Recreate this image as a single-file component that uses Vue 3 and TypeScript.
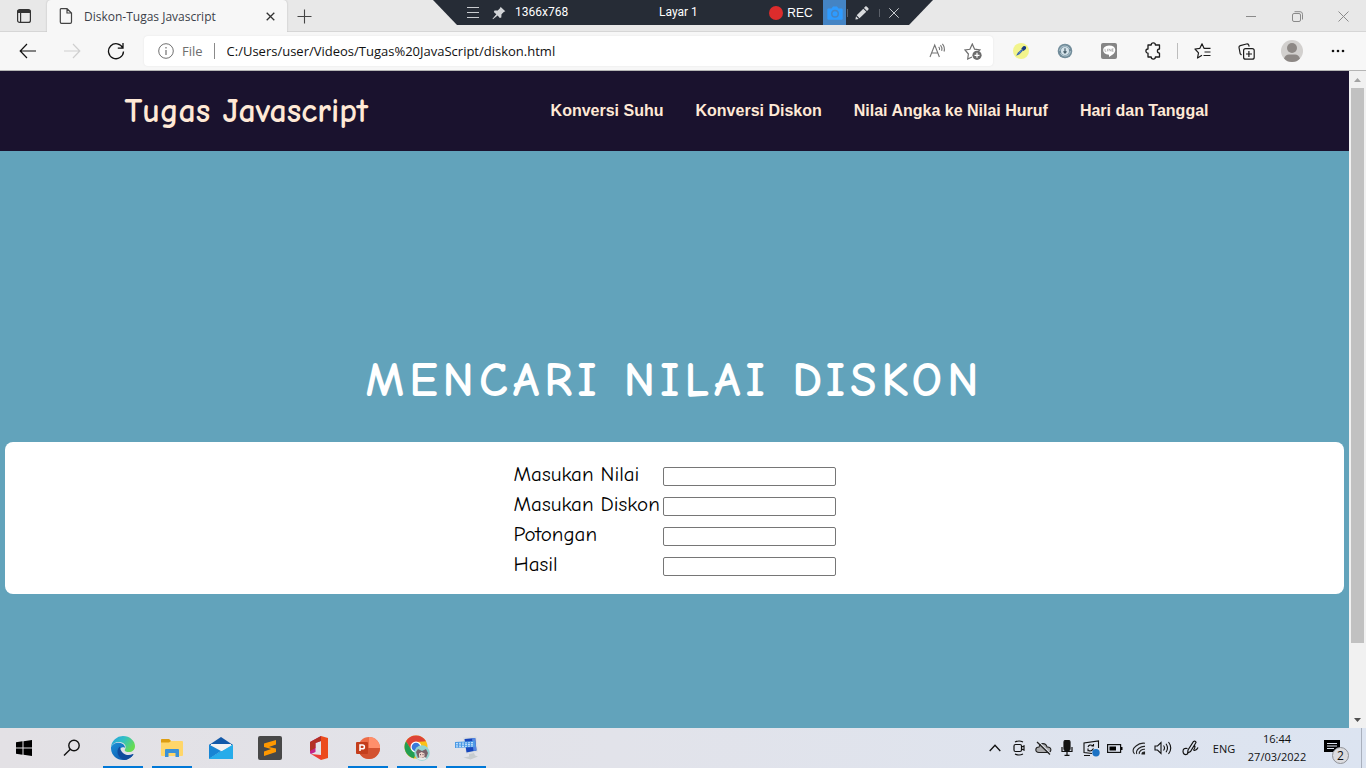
<script setup lang="ts">
import { ref } from 'vue'

interface Field {
  id: string
  label: string
}

const links: string[] = ['Konversi Suhu', 'Konversi Diskon', 'Nilai Angka ke Nilai Huruf', 'Hari dan Tanggal']

const fields: Field[] = [
  { id: 'nilai', label: 'Masukan Nilai' },
  { id: 'diskon', label: 'Masukan Diskon' },
  { id: 'potongan', label: 'Potongan' },
  { id: 'hasil', label: 'Hasil' },
]

const values = ref<Record<string, string>>({ nilai: '', diskon: '', potongan: '', hasil: '' })
const address = ref('C:/Users/user/Videos/Tugas%20JavaScript/diskon.html')
</script>

<template>
  <div class="screen">
    <div class="tabstrip">
      <button class="tab-menu" aria-label="Tab actions">
        <svg width="16" height="16" viewBox="0 0 16 16" fill="none" stroke="#333" stroke-width="1.2">
          <rect x="1.600" y="1.600" width="12.800" height="12.800" rx="2" />
          <path d="M1.600 3.500h12.800" stroke-width="3" />
          <path d="M4.600 5v9.400" />
        </svg>
      </button>
      <div class="tab">
        <svg width="14" height="16" viewBox="0 0 14 16" fill="none" stroke="#444" stroke-width="1.200">
          <path d="M2 .7h6L12.500 5v9q0 1.300-1.300 1.300H2.500Q1.300 15.300 1.300 14V1.500Q1.300.7 2 .7zM8 .9V5h4.300" />
        </svg>
        <span class="tab-title">Diskon-Tugas Javascript</span>
        <button class="tab-close" aria-label="Close tab">
          <svg width="9" height="9" viewBox="0 0 9 9" stroke="#333" stroke-width="1.300"><path d="M.7.7l7.600 7.600M8.300.7L.7 8.300" /></svg>
        </button>
      </div>
      <button class="tab-new" aria-label="New tab">
        <svg width="15" height="15" viewBox="0 0 15 15" stroke="#444" stroke-width="1.100"><path d="M7.500.5v14M.5 7.500h14" /></svg>
      </button>
      <div class="window-controls">
        <button aria-label="Minimize"><svg width="10" height="10" viewBox="0 0 10 10" stroke="#8a8a8a"><path d="M0 5.500h10" /></svg></button>
        <button aria-label="Restore">
          <svg width="11" height="11" viewBox="0 0 11 11" fill="none" stroke="#8a8a8a">
            <rect x=".5" y="2.500" width="8" height="8" rx="1.500" /><path d="M2.500.7h5.500q2.500 0 2.500 2.500v5.300" />
          </svg>
        </button>
        <button aria-label="Close"><svg width="11" height="11" viewBox="0 0 11 11" stroke="#8a8a8a"><path d="M.5.5l10 10M10.500.5l-10 10" /></svg></button>
      </div>
    </div>

    <div class="recorder">
      <button class="rec-menu" aria-label="Menu">
        <svg width="12" height="11" viewBox="0 0 12 11" stroke="#c9ccd0"><path d="M0 .5h12M0 5.500h12M0 10.500h12" /></svg>
      </button>
      <button class="rec-pin" aria-label="Pin">
        <svg width="14" height="14" viewBox="0 0 14 14" fill="#d2d4d7">
          <path d="M8.500.7L13.300 5.300 11.800 6 9.500 8.200 9.300 11.500 7.800 12 5.600 9.400 1 13.300.5 12.800 4.300 8.200 1.800 6 2.500 4.600 5.800 4.500 8.200 2z" />
        </svg>
      </button>
      <span class="rec-size">1366x768</span>
      <span class="rec-screen">Layar 1</span>
      <button class="rec-start"><span class="rec-dot"></span>REC</button>
      <button class="rec-camera" aria-label="Take screenshot">
        <svg width="16" height="14" viewBox="0 0 16 14">
          <path fill="#2e9bff" d="M1 2.500h3.500L6 .5h4l1.500 2H15l.7.7V13l-.7.700H1L.3 13V3.200z" />
          <circle cx="8" cy="7.700" r="4" fill="#4484c4" /><circle cx="8" cy="7.700" r="2.500" fill="#2e9bff" />
        </svg>
      </button>
      <button class="rec-tool" aria-label="Draw">
        <svg width="14" height="14" viewBox="0 0 14 14" fill="#d8dadd">
          <path d="M10.200.5Q11 0 11.700.6L13.400 2.300Q14 3 13.300 3.700L12 5 9 2zM8.300 2.700L11.300 5.700 4.500 12.300 1.700 9.300zM1 10.200L3.700 13 .4 13.600z" />
        </svg>
      </button>
      <button class="rec-tool" aria-label="Close recorder">
        <svg width="10" height="10" viewBox="0 0 10 10" stroke="#c9ccd0"><path d="M.3.3l9.400 9.400M9.700.3L.3 9.700" /></svg>
      </button>
    </div>

    <div class="toolbar">
      <button aria-label="Back">
        <svg width="18" height="16" viewBox="0 0 18 16" fill="none" stroke="#111" stroke-width="1.200"><path d="M17 8H1.500M8 1L1.200 8 8 15" /></svg>
      </button>
      <button aria-label="Forward" disabled>
        <svg width="18" height="16" viewBox="0 0 18 16" fill="none" stroke="#cfcfcf" stroke-width="1.200"><path d="M1 8h15.500M10 1l6.800 7-6.800 7" /></svg>
      </button>
      <button aria-label="Refresh">
        <svg width="18" height="18" viewBox="0 0 18 18" fill="none" stroke="#111" stroke-width="1.300">
          <path d="M15.800 6A7.500 7.500 0 1 0 16.500 9.500M16 1v5.200h-5.200" />
        </svg>
      </button>
      <div class="address">
        <svg width="16" height="16" viewBox="0 0 16 16" fill="none" stroke="#707070">
          <circle cx="8" cy="8" r="7.300" /><path d="M8 7v5M8 4v1.400" stroke-width="1.200" />
        </svg>
        <label class="scheme" for="address">File</label>
        <input id="address" v-model="address" type="text" spellcheck="false" />
        <button aria-label="Read aloud">
          <svg width="17" height="16" viewBox="0 0 17 16" fill="none" stroke="#757575" stroke-width="1.100">
            <path d="M1 14L5.700 2 10.400 14M2.700 10h6M9.700 3.800Q11 5.300 10.500 7M11.500 2.200Q13.600 4.700 12.700 7.800M13.400.8Q16.300 4.300 15 8.500" />
          </svg>
        </button>
        <button aria-label="Add to favorites">
          <svg width="18" height="17" viewBox="0 0 18 17" fill="none" stroke="#6e6e6e" stroke-width="1.200">
            <path d="M8 14l-4.300 2 .7-5L1 7l4.900-.7L8.300 1l2.300 5.200 5.300.7-2 2" />
            <circle cx="13" cy="12.300" r="4.600" fill="#6b6b6b" stroke="none" /><path d="M13 9.800v5M10.500 12.300h5" stroke="#fff" />
          </svg>
        </button>
      </div>
      <button aria-label="Color picker">
        <svg width="16" height="16" viewBox="0 0 16 16">
          <circle cx="8" cy="8" r="8" fill="#f2f48c" />
          <path d="M3.200 12.800L4.800 9.700 8.700 6.200 10 7.500 6.500 11.300z" fill="#2c5cae" /><path d="M8.300 5.600L10.300 3.300q1.500-.6 2.400.3.800.9.200 2.300L10.500 7.900z" fill="#173a82" /><path d="M5.700 10.500L8.300 8" stroke="#82a8e6" stroke-width=".7" />
        </svg>
      </button>
      <button aria-label="Download extension">
        <svg width="16" height="16" viewBox="0 0 16 16" fill="none">
          <circle cx="8" cy="8" r="7.300" fill="#718c9a" /><circle cx="8" cy="8" r="4" fill="#d6e4eb" />
          <path d="M2.700 8q.3-5 5.300-5 3.500 0 4.500 3M13.300 8q-.3 5-5.300 5-3.500 0-4.500-3" stroke="#b5c9d2" /><path d="M8 5.300v4.500M6.500 8.300L8 10l1.500-1.700" stroke="#49606c" stroke-width="1.200" />
        </svg>
      </button>
      <button aria-label="LINE">
        <svg width="16" height="16" viewBox="0 0 16 16">
          <rect width="16" height="16" rx="2" fill="#858585" /><path d="M8 2.500c7.800 0 7.500 6.700 3.700 9L8 14v-2.300C.2 11.500.3 2.500 8 2.500z" fill="#fff" />
          <path d="M4 5.800v2.500h1.300M6.500 5.800v2.500M8 8.300V5.800l2 2.500V5.800M12.500 5.800h-1.300v2.500h1.300M11.200 7h1.200" stroke="#909090" stroke-width=".6" fill="none" />
        </svg>
      </button>
      <button aria-label="Extensions">
        <svg width="16" height="18" viewBox="0 0 16 18" fill="none" stroke="#1c1c1c" stroke-width="1.300" stroke-linejoin="round">
          <path d="M3 3h3.200a2.100 2.100 0 0 1 4.200 0H14.500V7a2.100 2.100 0 0 0 0 4.200V15H10.400a2.100 2.100 0 0 1-4.200 0H3v-3.800a2.100 2.100 0 0 1 0-4.200z" />
        </svg>
      </button>
      <span class="divider"></span>
      <button aria-label="Favorites">
        <svg width="17" height="16" viewBox="0 0 17 16" fill="none" stroke="#1c1c1c" stroke-width="1.200" stroke-linejoin="round">
          <path d="M8 12.300L3.500 15l1-5.200L1 6l4.900-.7L8 .8l2 4.500h6.500M10.500 9h6M9.500 12.500h7" />
        </svg>
      </button>
      <button aria-label="Collections">
        <svg width="17" height="17" viewBox="0 0 17 17" fill="none" stroke="#1c1c1c" stroke-width="1.200">
          <path d="M3.500 12L2.200 10.800 1 4.500Q.8 3 2.200 2.600L8.500 1q1.600-.3 2.200 1l.5 1.700" /><rect x="5.600" y="5.600" width="10.600" height="10.600" rx="2" /><path d="M10.900 8v6M8 11h6" />
        </svg>
      </button>
      <button class="profile" aria-label="Profile">
        <svg width="22" height="22" viewBox="0 0 22 22">
          <circle cx="11" cy="11" r="11" fill="#d2d0ce" /><circle cx="11" cy="8" r="5" fill="#8d8885" /><path d="M3 18.500q1.500-4 5-4h6q3.500 0 5 4Q16 22 11 22t-8-3.500z" fill="#8d8885" />
        </svg>
      </button>
      <button aria-label="Settings and more">
        <svg width="14" height="4" viewBox="0 0 14 4" fill="#111"><circle cx="2" cy="2" r="1.300" /><circle cx="7" cy="2" r="1.300" /><circle cx="12" cy="2" r="1.300" /></svg>
      </button>
    </div>

    <div class="viewport">
      <div class="page">
        <header class="site-header">
          <div class="container">
            <a class="brand" href="#">Tugas Javascript</a>
            <nav>
              <a v-for="link in links" :key="link" href="#">{{ link }}</a>
            </nav>
          </div>
        </header>
        <main>
          <h1>MENCARI NILAI DISKON</h1>
          <form class="card" @submit.prevent>
            <div class="fields">
              <template v-for="field in fields" :key="field.id">
                <label :for="field.id">{{ field.label }}</label>
                <input :id="field.id" v-model="values[field.id]" type="text" />
              </template>
            </div>
          </form>
        </main>
      </div>
      <div class="scrollbar">
        <span class="scroll-end"><svg width="7" height="4" viewBox="0 0 7 4" fill="#a3a3a3"><path d="M0 4L3.500 0 7 4z" /></svg></span>
        <span class="thumb"></span>
        <span class="track"></span>
        <span class="scroll-end"><svg width="7" height="4" viewBox="0 0 7 4" fill="#505050"><path d="M0 0h7L3.500 4z" /></svg></span>
      </div>
    </div>

    <footer class="taskbar">
      <button class="task start" aria-label="Start">
        <svg width="16" height="16" viewBox="0 0 16 16"><path d="M0 2.200L6.500 1.300V7.500H0zM7.500 1.200L16 0V7.500H7.500zM0 8.500H6.500V14.700L0 13.800zM7.500 8.500H16V16L7.500 14.800z" /></svg>
      </button>
      <button class="task search" aria-label="Search">
        <svg width="18" height="18" viewBox="0 0 18 18" fill="none" stroke="#111" stroke-width="1.400"><circle cx="11" cy="6.500" r="5.200" /><path d="M7.300 10.300L1 16.600" /></svg>
      </button>
      <button class="task running" aria-label="Microsoft Edge">
        <svg width="24" height="24" viewBox="0 0 24 24">
          <defs>
            <linearGradient id="edge-a" x1="0" y1="0" x2="1" y2=".5"><stop offset="0" stop-color="#249fe0" /><stop offset=".5" stop-color="#31bfc6" /><stop offset="1" stop-color="#66dc52" /></linearGradient>
            <linearGradient id="edge-b" x1="0" y1="0" x2="1" y2="1"><stop offset="0" stop-color="#1b91d8" /><stop offset="1" stop-color="#0c4ca5" /></linearGradient>
          </defs>
          <path d="M0 11A12 12 0 0 1 12 0c7 0 12 5 12 10 0 4-3 6-6 6-3.500 0-5-1.300-4-2.700 1.500-2.300.5-6-4-7C6 5.300 2 7 0 11z" fill="url(#edge-a)" />
          <path d="M0 11C2 7 6 6 9.500 7c3 .8 4.700 3 4.500 4.700C9 9.500 7.200 15 11 18.500c3.500 3.200 8 2.500 11.200 0A12 12 0 0 1 12 24C5.500 24-.5 19 0 11z" fill="url(#edge-b)" />
          <path d="M8.800 10.500C4 15 7 22 13.500 23.900c3.500-.3 6.800-2.200 8.900-5.200.3-.600-.2-.8-.6-.6C16 21 9.500 17.500 8.800 10.500z" fill="#104b9d" />
        </svg>
      </button>
      <button class="task running" aria-label="File Explorer">
        <svg width="22" height="20" viewBox="0 0 22 20">
          <path d="M0 2q0-1 1-1h7l2 2h11q1 0 1 1v13q0 1-1 1H1q-1 0-1-1z" fill="#ffd669" /><path d="M0 2q0-1 1-1h7l2 2-2 1.500H0z" fill="#dd9d12" />
          <path d="M4 19v-7q0-1 1-1h12q1 0 1 1v7h-3.500v-4h-7v4z" fill="#3a91d7" />
        </svg>
      </button>
      <button class="task" aria-label="Mail">
        <svg width="24" height="22" viewBox="0 0 24 22">
          <path d="M0 8L12 0l12 8z" fill="#1259a9" /><path d="M2 7h20v8H2z" fill="#f2f2f3" /><path d="M0 7.500L12 14 0 22z" fill="#1785d4" /><path d="M24 7.500V22H0z" fill="#30b9ee" /><path d="M12 14l12 8H0z" fill="#1a95df" /><path d="M0 21.500L24 8v13q0 1-1 1H0z" fill="#27acea" />
        </svg>
      </button>
      <button class="task" aria-label="Sublime Text">
        <svg width="24" height="24" viewBox="0 0 24 24"><rect width="24" height="24" rx="2" fill="#484848" /><path d="M6 7.500L18 4v4.500L11 11l7 1.500V16L6 20v-4.500L13 13 6 11z" fill="#ff9800" /></svg>
      </button>
      <button class="task" aria-label="Office">
        <svg width="20" height="24" viewBox="0 0 20 24">
          <path d="M1 6L12 0v5L6.500 7v9L2 18q-1-.5-1-1.500z" fill="#c4248b" /><path d="M1 6L12 0v5L6.500 7v5L1 15z" fill="#b33024" /><path d="M12 0l7 2v20l-7 2z" fill="#ec4b1c" /><path d="M2 18l10 1v5z" fill="#ed3c36" />
        </svg>
      </button>
      <button class="task running" aria-label="PowerPoint">
        <svg width="26" height="24" viewBox="0 0 26 24">
          <circle cx="14" cy="12" r="11" fill="#ed6c47" /><path d="M14 1a11 11 0 0 1 11 11H14z" fill="#ff8f6b" /><path d="M3 12h22a11 11 0 0 1-22 0z" fill="#d35230" />
          <rect x="1" y="6" width="12" height="12" rx="1" fill="#c43e1c" /><path d="M5 15V9h2.500a1.900 1.900 0 0 1 0 3.800H5" fill="none" stroke="#fff" stroke-width="1.500" />
        </svg>
      </button>
      <button class="task running" aria-label="Chrome">
        <svg width="26" height="26" viewBox="0 0 26 26">
          <circle cx="12" cy="12" r="11.500" fill="#fbc116" /><path d="M2 6.300A11.500 11.500 0 0 1 22 6.300L12 7 7 14.500z" fill="#dd4336" /><path d="M2 6.300L7.500 15 12 17.500 10 23.300A11.500 11.500 0 0 1 2 6.300z" fill="#229e52" />
          <circle cx="12" cy="12" r="5.500" fill="#fff" /><circle cx="12" cy="12" r="4.300" fill="#3979dc" />
          <circle cx="18" cy="18" r="7.700" fill="#92d3d0" /><path d="M12 17l2-3 4 2 4-2 2 4-2 5h-8z" fill="#796269" /><path d="M15 18.500l2.500-1.500 3 1.500v3l-3 1.500-2.500-1.500z" fill="#efd3cb" /><path d="M13 23.500l3-1.500 2 1 3-1 1.500 1.500q-4.500 3-9.500 0z" fill="#e8ecec" /><path d="M16.500 19v1.200M19 19v1.200" stroke="#523f46" stroke-width=".8" />
        </svg>
      </button>
      <button class="task running" aria-label="On-screen keyboard">
        <svg width="25" height="24" viewBox="0 0 25 24">
          <path d="M9 1.500L22.500.5l1.500 15.500-12 2z" fill="#d9dde1" /><path d="M10.500 3l10.700-1 1.300 12.500-10 2z" fill="#1746bd" /><path d="M18 2.300l3.200-.3 1.300 12.500-3 .6z" fill="#5587e0" /><path d="M15 18l5-1 1 2.500 3 1-7.500 3-7-2 5.500-1z" fill="#c7cccf" />
          <path d="M1 6l20-1v6L1 12z" fill="#4b9ae5" /><path d="M2 7.500l18-1M2 9.200l18-1M2 10.900l18-1" stroke="#d7ebff" stroke-width=".9" stroke-dasharray="2 1" />
        </svg>
      </button>

      <div class="tray">
        <button aria-label="Show hidden icons"><svg width="12" height="8" viewBox="0 0 12 8" fill="none" stroke="#111" stroke-width="1.300"><path d="M.7 7L6 1.300 11.300 7" /></svg></button>
        <button aria-label="Meet now">
          <svg width="12" height="16" viewBox="0 0 12 16" fill="none" stroke="#111" stroke-width="1.200"><rect x="1" y="4.500" width="7.500" height="7" rx="1.500" /><path d="M8.500 7L11 6v4L8.500 9M2 2Q6 0 10 2M2 14q4 2 8 0" /></svg>
        </button>
        <button aria-label="OneDrive">
          <svg width="17" height="14" viewBox="0 0 17 14" fill="#aaaaac" stroke="#222" stroke-width="1.100"><path d="M4 11.500C-.5 11.500 0 6 4 6c1-4.500 7-4.500 8 0 5-.5 5 5.500 1 5.500z" /><path d="M3 0l13 13" stroke="#e0e4ed" /><path d="M2 1l13 12.500" stroke-width="1.300" /></svg>
        </button>
        <button aria-label="Microphone">
          <svg width="12" height="16" viewBox="0 0 12 16" fill="none" stroke="#111" stroke-width="1.200"><rect x="3" y=".5" width="6" height="10" rx="1.500" fill="#111" /><path d="M1 7v4.500h10V7M6 12v3.500M3.500 15.400h5" /></svg>
        </button>
        <button aria-label="Windows Update">
          <svg width="17" height="17" viewBox="0 0 17 17" fill="none" stroke="#111" stroke-width="1.100"><path d="M15.500 8V1L1 3v9.500l8 1M1 15.500h6M5 7q1-3 5-1.500M10.500 4v2h-2M5 8.500v2.300h2M5.500 10.500q3 1.500 5-2" /><circle cx="13" cy="12.700" r="3.700" fill="#1b72c4" stroke="none" /></svg>
        </button>
        <button aria-label="Battery"><svg width="16" height="9" viewBox="0 0 16 9"><rect x=".6" y=".6" width="13" height="7.800" fill="none" stroke="#111" stroke-width="1.200" /><path d="M2.500 2.500h6.500v4H2.500zM14 3h1.500v3H14z" /></svg></button>
        <button aria-label="Wi-Fi">
          <svg width="14" height="14" viewBox="0 0 14 14" fill="none" stroke="#222" stroke-width="1.100"><path d="M2.500 13Q-1 9 4 5 8 1.500 13 2.300M4.800 13Q3.500 10 7 7.200q3-2.200 6-1.800M7.300 13q-.5-2 1.700-3.700 2-1.300 4-1" /><path d="M10 13q0-2 2.500-2v2z" fill="#222" /></svg>
        </button>
        <button aria-label="Volume">
          <svg width="18" height="14" viewBox="0 0 18 14" fill="none" stroke="#111" stroke-width="1.100"><path d="M1 5h2.500L7 1.500v11L3.500 9H1zM9.500 4.500q2 2.500 0 5M12 2.700q3 4.300 0 8.600M14.500 1q4.500 6 0 12" /></svg>
        </button>
        <button class="pen" aria-label="Windows Ink">
          <svg width="17" height="16" viewBox="0 0 17 16" fill="none" stroke="#111" stroke-width="1.200"><path d="M6 10L11.500 1.500q2-1 2.500 1L8.500 11.500 5.700 13zM5.500 8.500Q1 7.500 1 11.500q.3 3.500 3.500 3 1.500-.5 1.300-2M12.500 5.500q1 1 0 3-1.500 2 0 2 2.500-.5 3.500-3" /></svg>
        </button>
        <button class="language">ENG</button>
        <button class="clock"><span>16:44</span><span>27/03/2022</span></button>
        <button class="notifications" aria-label="Notifications">
          <svg width="16" height="16" viewBox="0 0 16 16"><path d="M0 0h16v12H5l0 3.500V12H0z" /><path d="M3 3.500h10M3 6h10M3 8.500h7" stroke="#dfe5f0" /></svg>
          <span class="badge">2</span>
        </button>
        <span class="show-desktop"></span>
      </div>
    </footer>
  </div>
</template>

<style>
body {
  margin: 0;
}
</style>

<style scoped>
* {
  box-sizing: border-box;
}
.screen {
  position: relative;
  display: flex;
  flex-direction: column;
  height: 100vh;
  overflow: hidden;
  font-family: 'Segoe UI', 'Open Sans', sans-serif;
  font-size: 12px;
  color: #111;
}
svg {
  display: block;
  flex: none;
}
button {
  display: flex;
  align-items: center;
  justify-content: center;
  padding: 0;
  border: 0;
  background: none;
  color: inherit;
  font: inherit;
}
a {
  text-decoration: none;
}

.tabstrip {
  display: flex;
  height: 32px;
  background: #e8e8e8;
  box-shadow: inset 0 -1px #d6d6d6;
}
.tab-menu {
  width: 47px;
}
.tab {
  display: flex;
  align-items: center;
  width: 240px;
  padding: 0 9px 0 12px;
  border-radius: 4px 4px 0 0;
  background: #f7f7f7;
  box-shadow: 0 0 2px #b4b4b4;
  clip-path: inset(0 -3px 0 -3px);
}
.tab-title {
  flex: 1;
  margin-left: 11px;
  color: #3c3f4a;
  font-size: 12px;
  white-space: nowrap;
}
.tab-close {
  width: 16px;
  height: 16px;
}
.tab-new {
  width: 34px;
}
.window-controls {
  display: flex;
  margin-left: auto;
}
.window-controls button {
  width: 46px;
}

.recorder {
  position: absolute;
  top: 0;
  left: 50%;
  z-index: 1;
  display: flex;
  align-items: stretch;
  width: 500px;
  height: 25px;
  margin-left: -250px;
  padding: 0 22px 0 30px;
  background: #262c36;
  clip-path: polygon(0 0, 100% 0, 476px 100%, 24px 100%);
  color: #fff;
}
.rec-menu {
  width: 20px;
}
.rec-pin {
  width: 32px;
}
.rec-size,
.rec-screen {
  line-height: 25px;
  font-family: Roboto, sans-serif;
}
.rec-size {
  width: 144px;
}
.rec-screen {
  width: 110px;
}
.rec-start {
  gap: 4px;
  width: 44px;
  font-family: 'Liberation Sans', sans-serif;
  font-size: 12px;
}
.rec-dot {
  flex: none;
  width: 14px;
  height: 14px;
  border-radius: 50%;
  background: #dc2c2c;
}
.rec-camera {
  width: 23px;
  margin-left: 10px;
  background: #4484c4;
}
.rec-tool {
  width: 32px;
  background: linear-gradient(#5b6069, #5b6069) 1px center / 1px 8px no-repeat;
}

.toolbar {
  display: flex;
  align-items: center;
  height: 39px;
  padding: 0 6px;
  border-bottom: 1px solid #b5b5b5;
  background: #f7f7f7;
}
.toolbar > button {
  width: 44px;
  height: 30px;
}
.toolbar > .profile {
  margin: 0 2px;
}
.address {
  display: flex;
  flex: 1;
  align-items: center;
  height: 30px;
  margin: 0 6px;
  padding: 0 2px 0 14px;
  border-radius: 4px;
  background: #fff;
  box-shadow: 0 0 2px #e2e2e2;
}
.scheme {
  margin-left: 8px;
  padding-right: 11px;
  border-right: 1px solid #8a8a8a;
  color: #6e6e6e;
  font-size: 13px;
  line-height: 16px;
}
.address input {
  flex: 1;
  min-width: 0;
  padding: 0 0 0 12px;
  border: 0;
  outline: 0;
  background: none;
  color: #111;
  font-family: inherit;
  font-size: 13px;
}
.address button {
  width: 36px;
  height: 30px;
}
.divider {
  width: 1px;
  height: 16px;
  margin: 0 2px;
  background: #bdbdbd;
}

.viewport {
  display: flex;
  flex: 1;
  min-height: 0;
}
.page {
  display: flex;
  flex: 1;
  flex-direction: column;
  background: #62a3bb;
}
.site-header {
  background: #1a122e;
}
.container {
  display: flex;
  align-items: center;
  justify-content: space-between;
  max-width: 1100px;
  height: 80px;
  margin: 0 auto;
}
.brand {
  color: #ffe9d6;
  font-family: 'Comic Sans MS', 'Comic Neue', cursive;
  font-size: 34px;
  font-weight: 700;
}
nav {
  display: flex;
}
nav a {
  padding: 16px;
  color: #ffe9d6;
  font-family: 'Liberation Sans', Arial, sans-serif;
  font-size: 16px;
  font-weight: 700;
}
main {
  padding: 198px 5px 0;
  font-family: 'Comic Sans MS', 'Comic Neue', cursive;
}
h1 {
  margin: 0 0 30px;
  color: #fff;
  font-size: 48px;
  font-weight: 700;
  line-height: 63px;
  letter-spacing: 5px;
  text-align: center;
}
.card {
  display: flex;
  justify-content: center;
  padding: 17px 0 15px;
  border-radius: 8px;
  background: #fff;
}
.fields {
  display: grid;
  grid-template-columns: 149px 173px;
  grid-auto-rows: 30px;
  align-items: center;
}
.fields label {
  color: #000;
  font-size: 21px;
  line-height: 30px;
  white-space: nowrap;
}
.fields input {
  height: 19px;
  margin-top: 4px;
  padding: 1px 2px;
  border: 1px solid #767676;
  border-radius: 2px;
  background: #fff;
  font-size: 13px;
}

.scrollbar {
  display: flex;
  flex-direction: column;
  width: 17px;
  padding: 0 2px;
  background: #f1f1f1;
}
.scroll-end {
  display: flex;
  align-items: center;
  justify-content: center;
  height: 17px;
}
.thumb {
  flex: 555;
  background: #c1c1c1;
}
.track {
  flex: 68;
}

.taskbar {
  display: flex;
  height: 40px;
  background: linear-gradient(90deg, #e3e1e5, #e2e3ea 45%, #dce4f1);
}
.task {
  width: 48px;
  margin-right: 1px;
}
.start {
  margin-right: 0;
}
.search {
  margin-right: 3px;
}
.running {
  background: linear-gradient(#0078d7, #0078d7) center bottom / 40px 2px no-repeat;
}
.tray {
  display: flex;
  margin-left: auto;
}
.tray button {
  width: 24px;
}
.tray .pen {
  width: 30px;
}
.tray .language {
  width: 38px;
  font-size: 11px;
}
.tray .clock {
  flex-direction: column;
  width: 68px;
  font-size: 11px;
  line-height: 18px;
}
.tray .notifications {
  position: relative;
  width: 42px;
}
.badge {
  position: absolute;
  right: 4px;
  bottom: 4px;
  width: 17px;
  height: 17px;
  border: 1px solid #8f9196;
  border-radius: 50%;
  background: #dcdcdf;
  font-size: 12px;
  line-height: 15px;
  text-align: center;
}
.show-desktop {
  width: 5px;
  margin-left: 8px;
  border-left: 1px solid #a9b0bd;
}
</style>
